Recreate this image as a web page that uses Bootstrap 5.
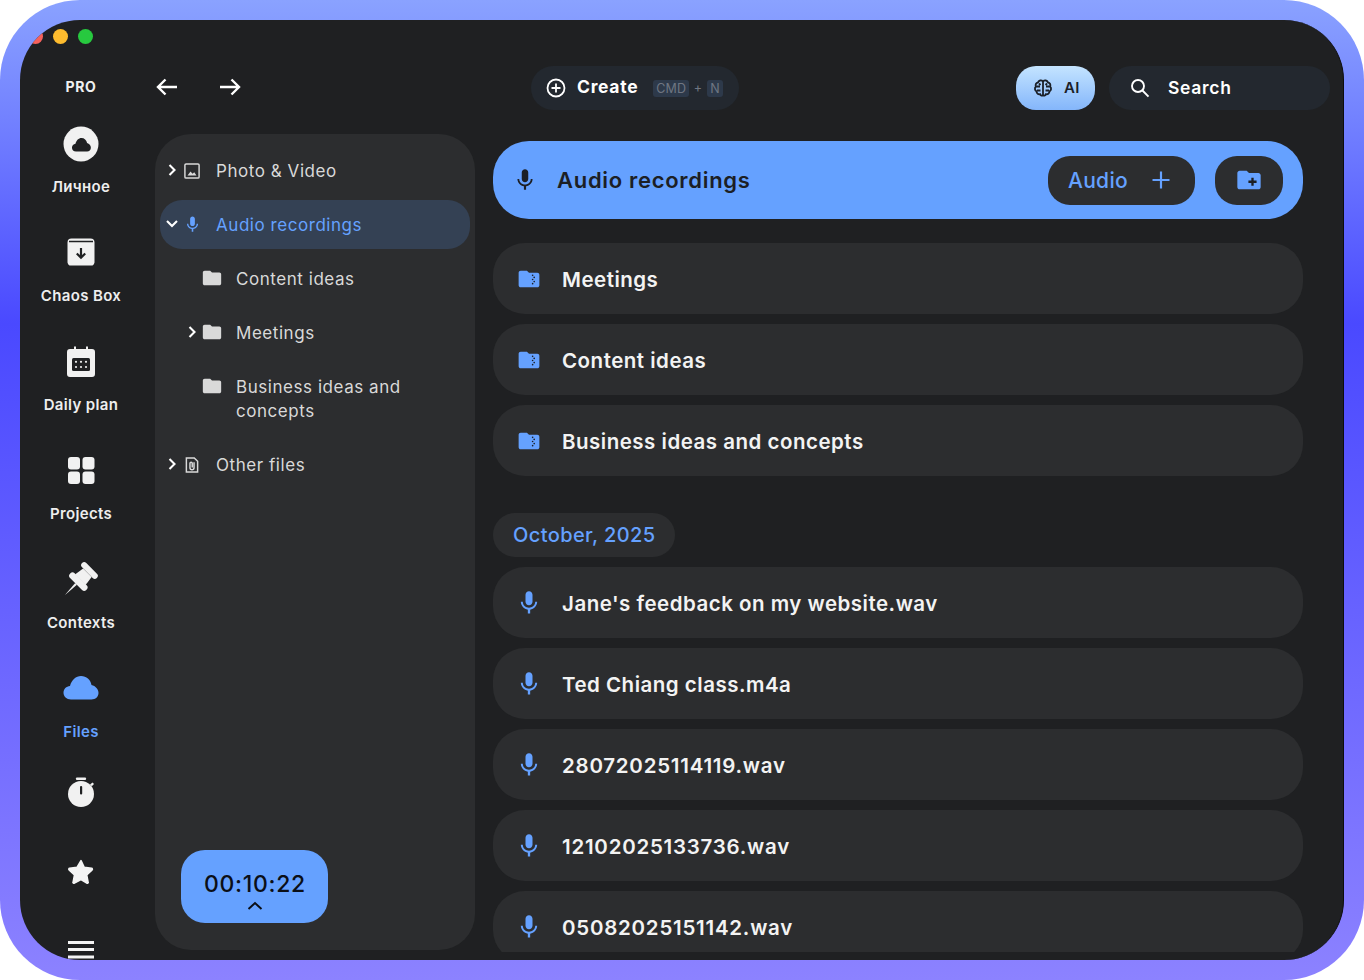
<!DOCTYPE html>
<html lang="en">
<head>
<meta charset="utf-8">
<title>Files</title>
<link href="https://cdn.jsdelivr.net/npm/bootstrap@5.3.0/dist/css/bootstrap.min.css" rel="stylesheet">
<style>
html,body{margin:0;background:#fff;}
body{font-family:Inter,"Liberation Sans",sans-serif;width:1364px;height:980px;overflow:hidden;}
svg{display:block;flex:none;}
.frame-outer{width:1364px;height:980px;padding:20px;border-radius:80px;background:linear-gradient(180deg,#8aa2ff 0,#4a49ff 33%,#8c82ff 100%);}
.app-win{height:940px;border-radius:60px;background:#1f2022;overflow:hidden;border-right:1px solid #0c0c0e;}
.lights{height:32px;padding-left:8px;gap:10px;}
.light{width:15px;height:15px;border-radius:50%;}
.l-red{background:#f5615c;}.l-yel{background:#fdbb2e;}.l-grn{background:#27c93f;}
.side-rail{width:135px;padding-right:13px;height:908px;overflow:hidden;}
.side-rail>*{flex:none;}
.pro-tag{height:30px;margin-top:20px;font-size:14px;font-weight:700;color:#f0f0f0;letter-spacing:.6px;line-height:30px;margin-bottom:24px;}
.rail-item{height:109px;font-size:15px;font-weight:600;color:#eee;letter-spacing:.35px;}
.rail-icon{height:36px;margin-bottom:15px;}
.rail-item .rail-lab{line-height:20px;}
.rail-active{color:#65a1ff;}
.rail-solo{height:78px;}
.rail-solo-first{height:78px;margin-top:-5px;}
.rail-menu{margin-top:7px;}
.content-col{width:1188px;}
.top-strip{height:44px;margin-top:14px;margin-bottom:24px;padding-right:13px;}
.nav-arrows{width:376px;}
.arr-b{margin-left:39px;}
.pill-dark{height:44px;background:#23282f;border-radius:22px;color:#fff;}
.pill-create{width:208px;padding-left:15px;font-size:17.5px;font-weight:700;letter-spacing:.7px;}
.pill-create .txt{margin-left:11px;padding-bottom:2px;}
.kbd-box{background:#2d394a;color:#6f7682;font-size:12.5px;font-weight:400;line-height:17px;height:17px;padding:0 3px;border-radius:3px;letter-spacing:.2px;}
.kbd-plus{color:#6f7682;font-size:12.5px;font-weight:400;margin:0 4.5px;}
.kbd-first{margin-left:15px;}
.pill-ai{width:79px;height:44px;border-radius:20px;background:linear-gradient(180deg,#c4e4ff 0,#84b6fb 100%);color:#1b2028;font-size:15px;font-weight:600;letter-spacing:.4px;gap:11px;padding-left:17px;}
.pill-search{width:221px;margin-left:14px;padding-left:21px;font-size:17.5px;font-weight:600;letter-spacing:.7px;gap:18px;}
.body-row{height:818px;}
.tree-panel{width:320px;height:816px;background:#2c2d2f;border-radius:36px;padding:12px 5px 27px;}
.tree-row{padding:12.5px 0;line-height:24px;font-size:17px;color:#d9d9d9;letter-spacing:.55px;border-radius:22px;}
.tree-row.sel{background:#344154;color:#65a1ff;}
.tree-row+.tree-row{margin-top:5px;}
.tree-row.deep{padding-left:20px;}
.chev-slot{width:24px;height:24px;}
.ico-slot{width:18px;height:24px;margin-left:-1px;margin-right:15px;}
.tree-label{width:190px;}
.clock-pill{width:147px;height:73px;margin-left:21px;background:#65a1ff;border-radius:24px;color:#0b0f17;font-size:23px;font-weight:500;letter-spacing:.7px;line-height:26px;padding-top:21px;padding-left:1px;}
.clock-pill svg{margin-top:3px;}
.list-pane{width:810px;margin-left:18px;margin-top:7px;height:811px;overflow:hidden;}
.head-band{height:78px;flex:none;background:#65a1ff;border-radius:36px;padding:0 20px 0 19px;color:#1c1f25;font-size:22px;font-weight:600;letter-spacing:.7px;margin-bottom:24px;}
.head-band .ttl{margin-left:19px;}
.btn-audio{width:147px;height:49px;background:#2c2d2f;border-radius:22px;color:#65a1ff;font-size:21px;font-weight:500;padding:2px 0 0 20px;letter-spacing:.3px;margin-right:20px;}
.btn-audio svg{margin-left:23px;margin-top:-2px;}
.btn-fold{width:68px;height:49px;background:#2c2d2f;border-radius:22px;}
.file-row{height:71px;background:#2c2d2f;border-radius:32px;padding-left:22px;color:#f3f3f3;font-size:20.5px;font-weight:600;letter-spacing:.5px;margin-bottom:10px;flex:none;}
.file-row .nm{margin-left:19px;padding-top:3px;}
.file-row .nm-digits{letter-spacing:.75px;}
.date-pill{height:44px;width:182px;flex:none;margin-top:27px;margin-bottom:10px;background:#2c2d2f;border-radius:22px;color:#65a1ff;font-size:20px;font-weight:500;letter-spacing:.4px;padding-left:20px;}
</style>
</head>
<body>
<svg width="0" height="0" class="position-absolute">
  <defs>
    <symbol id="mic" viewBox="0 0 24 24"><path d="M12 14c1.660 0 3-1.340 3-3V5c0-1.660-1.340-3-3-3S9 3.340 9 5v6c0 1.660 1.340 3 3 3zm5.300-3c0 3-2.540 5.100-5.300 5.100S6.700 14 6.700 11H5c0 3.410 2.720 6.230 6 6.720V21h2v-3.280c3.280-.48 6-3.300 6-6.720h-1.700z"/></symbol>
    <symbol id="fold" viewBox="0 0 24 24"><path d="M10 4H4c-1.100 0-2 .9-2 2v12c0 1.100.9 2 2 2h16c1.100 0 2-.9 2-2V8c0-1.100-.9-2-2-2h-8l-2-2z"/></symbol>
    <symbol id="zipfold" viewBox="-1.500 -1.500 27 27"><path fill="#65a1ff" d="M10 4H4c-1.100 0-2 .9-2 2v12c0 1.100.9 2 2 2h16c1.100 0 2-.9 2-2V8c0-1.100-.9-2-2-2h-8l-2-2z"/><g fill="#1c1f25"><circle cx="15.500" cy="8.500" r=".8"/><circle cx="17" cy="10.500" r=".8"/><circle cx="15.500" cy="12.500" r=".8"/><circle cx="17" cy="14.500" r=".8"/><circle cx="15.500" cy="16.500" r=".8"/></g></symbol>
  </defs>
</svg>
<div class="frame-outer">
<div class="app-win d-flex flex-column">
  <div class="lights d-flex align-items-center">
    <span class="light l-red"></span><span class="light l-yel"></span><span class="light l-grn"></span>
  </div>
  <div class="d-flex">
    <nav class="side-rail d-flex flex-column align-items-center">
      <div class="pro-tag">PRO</div>
      <div class="rail-item d-flex flex-column align-items-center">
        <div class="rail-icon"><svg width="36" height="36" viewBox="0 0 36 36"><circle cx="18" cy="18" r="17.500" fill="#f1f1f1"/><path transform="translate(8.700 9) scale(.54 .58)" fill="#1f2022" d="M8 28.500C3.500 28.500.5 25.500.5 21.800.5 18 3.300 15.300 7 15 8.500 9 13 5 18 5c5.500 0 9.500 3.500 10.500 9 4 1 7 4 7 8 0 3.700-3 6.500-7 6.500z"/></svg></div>
        <div class="rail-lab">Личное</div>
      </div>
      <div class="rail-item d-flex flex-column align-items-center">
        <div class="rail-icon"><svg width="36" height="36" viewBox="0 0 36 36"><path d="M8.500 3.500h19a4 4 0 0 1 4 4v20a4 4 0 0 1-2 3h-23a4 4 0 0 1-2-3v-20a4 4 0 0 1 4-4z" fill="#f1f1f1"/><path d="M6 6.500h24" stroke="#1f2022" stroke-width="1.500"/><path d="M18 13v9M13.800 18.500l4.200 4.200 4.200-4.200" fill="none" stroke="#1f2022" stroke-width="2.200"/></svg></div>
        <div class="rail-lab">Chaos Box</div>
      </div>
      <div class="rail-item d-flex flex-column align-items-center">
        <div class="rail-icon"><svg width="36" height="36" viewBox="0 0 36 36"><path d="M7 4h4V1.500h2V4h10V1.500h2V4h4a3 3 0 0 1 3 3v22a3 3 0 0 1-3 3H7a3 3 0 0 1-3-3V7a3 3 0 0 1 3-3z" transform="translate(0 1)" fill="#f1f1f1"/><rect x="9" y="14" width="18" height="13" rx="1.500" fill="#1f2022"/><g fill="#f1f1f1"><circle cx="13" cy="17.800" r="1.100"/><circle cx="18" cy="17.800" r="1.100"/><circle cx="23" cy="17.800" r="1.100"/><circle cx="13" cy="23" r="1.100"/><circle cx="18" cy="23" r="1.100"/><circle cx="23" cy="23" r="1.100"/></g></svg></div>
        <div class="rail-lab">Daily plan</div>
      </div>
      <div class="rail-item d-flex flex-column align-items-center">
        <div class="rail-icon"><svg width="36" height="36" viewBox="0 0 36 36" fill="#f1f1f1"><rect x="5" y="4" width="12" height="12.500" rx="3"/><rect x="19.500" y="4" width="12" height="12.500" rx="3"/><rect x="5" y="18.500" width="12" height="12.500" rx="3"/><rect x="19.500" y="18.500" width="12" height="12.500" rx="3"/></svg></div>
        <div class="rail-lab">Projects</div>
      </div>
      <div class="rail-item d-flex flex-column align-items-center">
        <div class="rail-icon"><svg width="36" height="36" viewBox="0 0 36 36" fill="#f1f1f1"><g transform="translate(-2 1) rotate(45 20 16)"><rect x="9.500" y="1" width="21" height="6" rx="3"/><path d="M14 7h12l1.500 10H12.500z"/><rect x="8.500" y="16.500" width="23" height="6.500" rx="3"/><path d="M18.800 23h2.400l-1.200 16z"/></g></svg></div>
        <div class="rail-lab">Contexts</div>
      </div>
      <div class="rail-item rail-active d-flex flex-column align-items-center">
        <div class="rail-icon"><svg width="36" height="36" viewBox="0 0 36 36"><path fill="#65a1ff" d="M8 28.500C3.500 28.500.5 25.500.5 21.800.5 18 3.300 15.300 7 15 8.500 9 13 5 18 5c5.500 0 9.500 3.500 10.500 9 4 1 7 4 7 8 0 3.700-3 6.500-7 6.500z"/></svg></div>
        <div class="rail-lab">Files</div>
      </div>
      <div class="rail-solo-first d-flex"><svg width="36" height="36" viewBox="0 0 36 36"><rect x="13" y="2.500" width="10" height="2.500" rx=".8" fill="#f1f1f1"/><path d="M27 9.500l2.500-2 1.500 1.500-2.200 2.300" fill="#f1f1f1"/><circle cx="18" cy="19" r="13" fill="#f1f1f1"/><rect x="17" y="11" width="2.200" height="8.500" rx="1" fill="#1f2022"/></svg></div>
      <div class="rail-solo d-flex"><svg width="36" height="36" viewBox="0 0 36 36"><path transform="translate(3.600 4) scale(.8)" d="M18 4.500l4 8.500 9.300 1.200c.9.100 1.200 1.200.6 1.800l-6.800 6.400 1.800 9.200c.2.900-.8 1.600-1.600 1.100L18 28.300 9.700 32.700c-.8.500-1.800-.2-1.600-1.100l1.800-9.200-6.800-6.400c-.6-.6-.3-1.700.6-1.800L13 13z" fill="#f4f4f4" stroke="#f4f4f4" stroke-width="2" stroke-linejoin="round"/></svg></div>
      <div class="rail-menu"><svg width="36" height="24" viewBox="0 0 36 24"><path d="M5 4.500h26M5 11.500h26M5 19h26" stroke="#f4f4f4" stroke-width="2.800"/></svg></div>
    </nav>

    <div class="content-col d-flex flex-column">
      <header class="top-strip d-flex align-items-center">
        <div class="nav-arrows d-flex align-items-center">
          <svg width="24" height="24" viewBox="0 1 24 24"><path d="M22 12H3M10.500 4.500L3 12l7.500 7.500" fill="none" stroke="#fff" stroke-width="2.400"/></svg>
          <svg class="arr-b" width="24" height="24" viewBox="0 1 24 24"><path d="M2 12h19M13.500 4.500L21 12l-7.500 7.500" fill="none" stroke="#fff" stroke-width="2.400"/></svg>
        </div>
        <div class="pill-dark pill-create d-flex align-items-center">
          <svg width="20" height="20" viewBox="0 0 20 20"><circle cx="10" cy="10" r="8.500" fill="none" stroke="#fff" stroke-width="1.800"/><path d="M10 5.500v9M5.500 10h9" stroke="#fff" stroke-width="1.800"/></svg>
          <span class="txt">Create</span>
          <span class="kbd-box kbd-first">CMD</span><span class="kbd-plus">+</span><span class="kbd-box">N</span>
        </div>
        <div class="pill-ai d-flex align-items-center ms-auto">
          <svg width="20" height="20" viewBox="0 0 20 20" fill="none" stroke="#1b2028" stroke-width="1.800"><path d="M10 2.500v15M10 3.500C8.500 1.800 5.500 2.200 5 4.500 3 4.800 2 6.800 3 8.500 1.300 10 1.700 12.600 3.500 13.300c0 2.300 2 3.400 3.500 2.900.6 1.500 2 1.800 3 .8 1 1 2.400.7 3-.8 1.500.5 3.500-.6 3.500-2.900 1.800-.7 2.200-3.300.5-4.800 1-1.700 0-3.700-2-4-.5-2.300-3.500-2.700-5-1z"/><path d="M3.500 8.500H7M16.500 8.500H13M4 12.500h3.500M16 12.500h-3.500M6 5.500l1.500 1.500M14 5.500L12.500 7"/></svg>
          <span>AI</span>
        </div>
        <div class="pill-dark pill-search d-flex align-items-center">
          <svg width="20" height="20" viewBox="0 0 20 20" fill="none" stroke="#fff" stroke-width="1.900"><circle cx="8" cy="8" r="6"/><path d="M12.500 12.500l6 6.200"/></svg>
          <span>Search</span>
        </div>
      </header>

      <div class="body-row d-flex">
        <aside class="tree-panel d-flex flex-column">
          <div class="tree-row d-flex">
            <span class="chev-slot d-flex align-items-center justify-content-center"><svg width="10" height="14" viewBox="0 1 10 14"><path d="M2.500 2l5 5-5 5" fill="none" stroke="#fff" stroke-width="2.100"/></svg></span>
            <span class="ico-slot d-flex align-items-center justify-content-center"><svg width="18" height="18" viewBox="0 0 16 16"><rect x="1.700" y="1.700" width="12.600" height="12.600" rx="1" fill="none" stroke="#d9d9d9" stroke-width="1.300"/><path d="M4 12l2.700-3.500L8.500 10.500l1.500-1.500 2 3z" fill="#d9d9d9"/></svg></span>
            <span class="tree-label">Photo &amp; Video</span>
          </div>
          <div class="tree-row sel d-flex">
            <span class="chev-slot d-flex align-items-center justify-content-center"><svg width="14" height="10" viewBox="0 1.500 14 10"><path d="M2 2.500l5 5 5-5" fill="none" stroke="#fff" stroke-width="2.100"/></svg></span>
            <span class="ico-slot d-flex align-items-center justify-content-center"><svg width="19" height="19" fill="#65a1ff"><use href="#mic"/></svg></span>
            <span class="tree-label">Audio recordings</span>
          </div>
          <div class="tree-row deep d-flex">
            <span class="chev-slot"></span>
            <span class="ico-slot d-flex align-items-center justify-content-center"><svg width="22" height="22" viewBox="0 0 22 22" fill="#d9d9d9"><use href="#fold" width="22" height="22" y="-1"/></svg></span>
            <span class="tree-label">Content ideas</span>
          </div>
          <div class="tree-row deep d-flex">
            <span class="chev-slot d-flex align-items-center justify-content-center"><svg width="10" height="14" viewBox="0 1 10 14"><path d="M2.500 2l5 5-5 5" fill="none" stroke="#fff" stroke-width="2.100"/></svg></span>
            <span class="ico-slot d-flex align-items-center justify-content-center"><svg width="22" height="22" viewBox="0 0 22 22" fill="#d9d9d9"><use href="#fold" width="22" height="22" y="-1"/></svg></span>
            <span class="tree-label">Meetings</span>
          </div>
          <div class="tree-row deep d-flex">
            <span class="chev-slot"></span>
            <span class="ico-slot d-flex align-items-center justify-content-center"><svg width="22" height="22" viewBox="0 0 22 22" fill="#d9d9d9"><use href="#fold" width="22" height="22" y="-1"/></svg></span>
            <span class="tree-label">Business ideas and concepts</span>
          </div>
          <div class="tree-row d-flex">
            <span class="chev-slot d-flex align-items-center justify-content-center"><svg width="10" height="14" viewBox="0 1 10 14"><path d="M2.500 2l5 5-5 5" fill="none" stroke="#fff" stroke-width="2.100"/></svg></span>
            <span class="ico-slot d-flex align-items-center justify-content-center"><svg width="18" height="18" viewBox="0 0 16 16" fill="none" stroke="#d9d9d9" stroke-width="1.300"><path d="M3 1.700h7l3 3v9.600H3z"/><path d="M9.800 5.500v5a1.800 1.800 0 0 1-3.600 0V6.500a1 1 0 0 1 2 0v3.800"/></svg></span>
            <span class="tree-label">Other files</span>
          </div>
          <div class="clock-pill mt-auto d-flex flex-column align-items-center">
            <span>00:10:22</span>
            <svg width="18" height="12" viewBox="0 0 18 12"><path d="M2.500 9L9 3l6.500 6" fill="none" stroke="#0b0f17" stroke-width="2"/></svg>
          </div>
        </aside>

        <main class="list-pane d-flex flex-column">
          <div class="head-band d-flex align-items-center">
            <svg width="26" height="26" fill="#1c1f25"><use href="#mic"/></svg>
            <span class="ttl">Audio recordings</span>
            <span class="btn-audio d-flex align-items-center ms-auto">Audio<svg width="20" height="20" viewBox="0 0 20 20"><path d="M10 1.500v17M1.500 10h17" stroke="#65a1ff" stroke-width="2.200"/></svg></span>
            <span class="btn-fold d-flex align-items-center justify-content-center"><svg width="28" height="28" viewBox="0 0 24 24"><path fill="#65a1ff" d="M10 4H4c-1.100 0-2 .9-2 2v12c0 1.100.9 2 2 2h16c1.100 0 2-.9 2-2V8c0-1.100-.9-2-2-2h-8l-2-2z"/><path d="M15 10v7M11.500 13.500h7" stroke="#1c1f25" stroke-width="2"/></svg></span>
          </div>
          <div class="file-row d-flex align-items-center"><svg width="28" height="28"><use href="#zipfold"/></svg><span class="nm">Meetings</span></div>
          <div class="file-row d-flex align-items-center"><svg width="28" height="28"><use href="#zipfold"/></svg><span class="nm">Content ideas</span></div>
          <div class="file-row d-flex align-items-center"><svg width="28" height="28"><use href="#zipfold"/></svg><span class="nm">Business ideas and concepts</span></div>
          <div class="date-pill d-flex align-items-center">October, 2025</div>
          <div class="file-row d-flex align-items-center"><svg width="28" height="28" fill="#65a1ff"><use href="#mic"/></svg><span class="nm">Jane's feedback on my website.wav</span></div>
          <div class="file-row d-flex align-items-center"><svg width="28" height="28" fill="#65a1ff"><use href="#mic"/></svg><span class="nm">Ted Chiang class.m4a</span></div>
          <div class="file-row d-flex align-items-center"><svg width="28" height="28" fill="#65a1ff"><use href="#mic"/></svg><span class="nm nm-digits">28072025114119.wav</span></div>
          <div class="file-row d-flex align-items-center"><svg width="28" height="28" fill="#65a1ff"><use href="#mic"/></svg><span class="nm nm-digits">12102025133736.wav</span></div>
          <div class="file-row d-flex align-items-center"><svg width="28" height="28" fill="#65a1ff"><use href="#mic"/></svg><span class="nm nm-digits">05082025151142.wav</span></div>
        </main>
      </div>
    </div>
  </div>
</div>
</div>
<script src="https://cdn.jsdelivr.net/npm/bootstrap@5.3.0/dist/js/bootstrap.bundle.min.js"></script>
</body>
</html>
